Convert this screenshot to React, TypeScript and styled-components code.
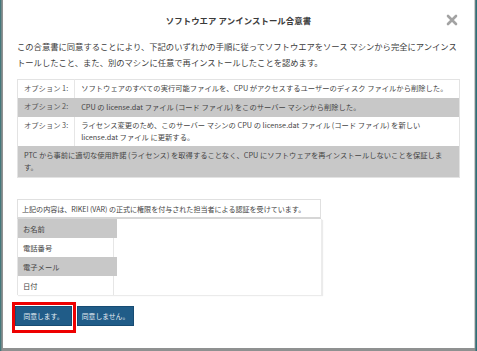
import { Fragment } from 'react';
import styled, { createGlobalStyle } from 'styled-components';

const GlobalStyle = createGlobalStyle`
    html, body {
        margin: 0;
        padding: 0;
    }
    body {
        background: #8f9191;
        font-family: "Noto Sans CJK JP", "Noto Sans", sans-serif;
    }
`;

const Backdrop = styled.div`
    width: 477px;
    height: 351px;
    box-sizing: border-box;
    padding: 0 2px 3px 3px;
    background: linear-gradient(to right, #2b6f74 0, #8f9191 2px, #8f9191 475px, #2d6f78 476px);
`;

const Modal = styled.div`
    height: 100%;
    box-sizing: border-box;
    background: #ffffff;
    border-right: 1px solid #cfcfcf;
    padding: 0 14px;
    display: flex;
    flex-direction: column;
`;

const Header = styled.div`
    height: 38px;
    display: flex;
    align-items: center;
    justify-content: center;
    position: relative;
    padding-top: 2px;
    box-sizing: border-box;
`;

const Title = styled.h4`
    margin: 0;
    font-size: 8.4px;
    font-weight: 700;
    color: #3a3a3a;
    letter-spacing: 0.1px;
`;

const Close = styled.button`
    position: absolute;
    right: 2px;
    top: 14px;
    width: 12px;
    height: 12px;
    border: 0;
    padding: 0;
    background: none;
    cursor: pointer;
    display: flex;
`;

const Intro = styled.p`
    margin: 0;
    font-size: 8.3px;
    line-height: 16px;
    color: #3c3c3c;
`;

const OptionsTable = styled.table`
    margin-top: 9px;
    width: 443px;
    border-collapse: collapse;
    border: 1px solid #e3e3e3;
    font-size: 7.3px;
    color: #444;
`;

const Row = styled.tr<{ $shaded?: boolean }>`
    background: ${(p) => (p.$shaded ? '#c8c8c8' : '#ffffff')};
`;

const LabelCell = styled.td<{ $shaded?: boolean }>`
    width: 43px;
    padding: 3px 6px;
    line-height: 11.5px;
    vertical-align: top;
    white-space: nowrap;
    color: #555;
    border-right: 1px solid ${(p) => (p.$shaded ? '#c8c8c8' : '#e6e6e6')};
`;

const TextCell = styled.td<{ $tall?: boolean }>`
    padding: ${(p) => (p.$tall ? '4px 6px' : '3px 6px')};
    line-height: 11.5px;
    vertical-align: top;
`;

const Confirm = styled.div`
    margin-top: 21px;
    width: 304px;
    box-sizing: border-box;
    border: 1px solid #e0e0e0;
    border-bottom: 2px solid #d6d6d6;
    padding: 0 4px;
    height: 20px;
    display: flex;
    align-items: center;
    white-space: nowrap;
    overflow: hidden;
    font-size: 7.1px;
    letter-spacing: -0.05px;
    color: #444;
`;

const Fields = styled.div`
    width: 304px;
    display: grid;
    grid-template-columns: 100px 1fr;
    border-right: 1px solid #ececec;
    box-shadow: 1px 1px 1px rgba(0, 0, 0, 0.08);
`;

const FieldLabel = styled.div<{ $shaded?: boolean }>`
    height: 19px;
    display: flex;
    align-items: center;
    padding-left: 5px;
    font-size: 7.3px;
    color: #444;
    background: ${(p) => (p.$shaded ? '#c8c8c8' : '#ffffff')};
    box-shadow: ${(p) => (p.$shaded ? 'none' : 'inset -1px 0 0 #e6e6e6')};
    border-left: 1px solid #e4e4e4;
    margin-right: ${(p) => (p.$shaded ? '0' : '3px')};
`;

const FieldValue = styled.div`
    height: 19px;
    background: #ffffff;
`;

const Actions = styled.div`
    margin-top: 7px;
    display: flex;
    align-items: flex-start;
    gap: 1px;
`;

const Highlight = styled.span`
    display: inline-flex;
    border: 3px solid #ee0000;
    padding: 1px 1px 4px 0;
    margin-left: -5px;
`;

const Button = styled.button`
    width: 57px;
    height: 20px;
    border: 1px solid #174c73;
    background: #205c88;
    color: #e9eff5;
    font-family: "Noto Sans CJK JP", sans-serif;
    font-size: 6.8px;
    padding: 0;
    cursor: pointer;
`;

const Plain = styled.span`
    display: inline-flex;
    padding-top: 4px;
`;

const options = [
    {
        label: 'オプション 1:',
        text: 'ソフトウェアのすべての実行可能ファイルを、CPU がアクセスするユーザーのディスク ファイルから削除した。',
    },
    {
        label: 'オプション 2:',
        text: 'CPU の license.dat ファイル (コード ファイル) をこのサーバー マシンから削除した。',
        shaded: true,
    },
    {
        label: 'オプション 3:',
        text: 'ライセンス変更のため、このサーバー マシンの CPU の license.dat ファイル (コード ファイル) を新しい license.dat ファイル に更新する。',
    },
];

const fields = ['お名前', '電話番号', '電子メール', '日付'];

export default function App() {
    return (
        <>
            <GlobalStyle />
            <Backdrop>
                <Modal>
                    <Header>
                        <Title>ソフトウエア アンインストール合意書</Title>
                        <Close aria-label="閉じる">
                            <svg width="12" height="12" viewBox="0 0 12 12">
                                <path
                                    d="M2 2 L10 10 M10 2 L2 10"
                                    stroke="#a3a3a3"
                                    strokeWidth="2.6"
                                    strokeLinecap="round"
                                />
                            </svg>
                        </Close>
                    </Header>
                    <Intro>
                        この合意書に同意することにより、下記のいずれかの手順に従ってソフトウエアをソース マシンから完全にアンインストールしたこと、また、別のマシンに任意で再インストールしたことを認めます。
                    </Intro>
                    <OptionsTable>
                        <tbody>
                            {options.map((o) => (
                                <Row key={o.label} $shaded={o.shaded}>
                                    <LabelCell $shaded={o.shaded}>{o.label}</LabelCell>
                                    <TextCell $tall={o.shaded}>{o.text}</TextCell>
                                </Row>
                            ))}
                            <Row $shaded>
                                <TextCell colSpan={2} $tall>
                                    PTC から事前に適切な使用許諾 (ライセンス) を取得することなく、CPU にソフトウェアを再インストールしないことを保証します。
                                </TextCell>
                            </Row>
                        </tbody>
                    </OptionsTable>
                    <Confirm>
                        上記の内容は、RIKEI (VAR) の正式に権限を付与された担当者による認証を受けています。
                    </Confirm>
                    <Fields>
                        {fields.map((f, i) => (
                            <Fragment key={f}>
                                <FieldLabel $shaded={i % 2 === 0}>{f}</FieldLabel>
                                <FieldValue />
                            </Fragment>
                        ))}
                    </Fields>
                    <Actions>
                        <Highlight>
                            <Button>同意します。</Button>
                        </Highlight>
                        <Plain>
                            <Button>同意しません。</Button>
                        </Plain>
                    </Actions>
                </Modal>
            </Backdrop>
        </>
    );
}
